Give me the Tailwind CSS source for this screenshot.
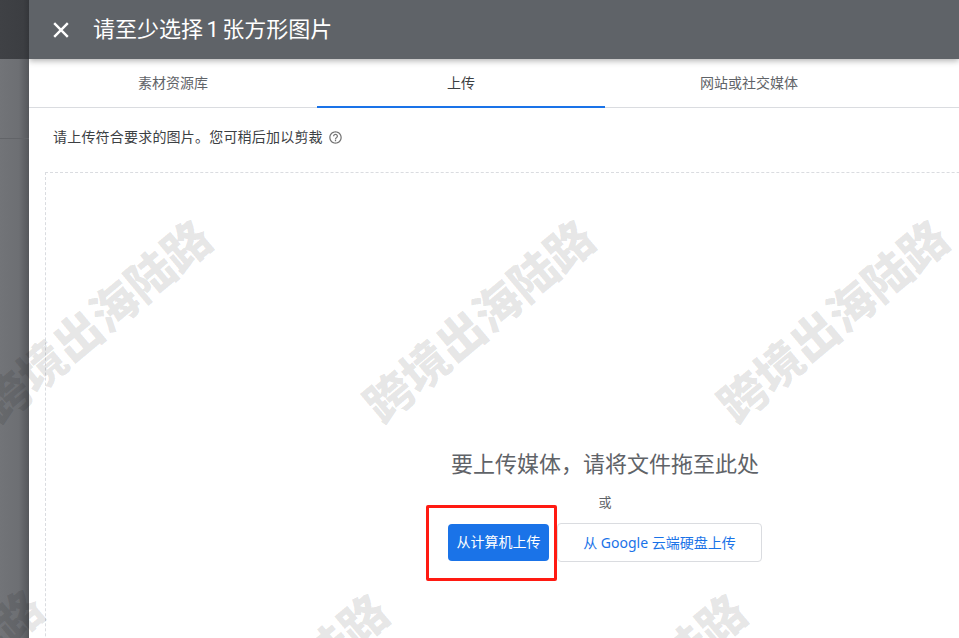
<!DOCTYPE html>
<html lang="zh-CN">
<head>
<meta charset="utf-8">
<script src="https://cdn.jsdelivr.net/npm/@tailwindcss/browser@4"></script>
</head>
<body class="font-['Roboto','Noto_Sans_CJK_SC',sans-serif]">
<div class="relative flex h-[638px] w-[959px] overflow-hidden bg-white">
  <aside class="flex h-full w-[29px] shrink-0 flex-col bg-[linear-gradient(90deg,#727478_0%,#6d6f73_65%,#55575b_100%)]">
    <div class="h-[59px] shrink-0 bg-[linear-gradient(90deg,#3f4145_0%,#3c3e42_80%,#34363a_100%)]"></div>
    <div class="h-[80px] shrink-0 border-b border-[#626468]"></div>
  </aside>
  <main class="flex h-full min-w-0 flex-1 flex-col overflow-hidden">
    <header class="z-10 flex h-[59px] shrink-0 items-center bg-[#5f6368] pl-[24px] shadow-[0_2px_6px_rgba(0,0,0,0.3)]">
      <svg class="h-[16px] w-[16px]" viewBox="0 0 16 16" fill="none" stroke="#fff" stroke-width="2.4"><path d="M1.2 1.2l13.6 13.6M14.8 1.2L1.2 14.8"/></svg>
      <h1 class="ml-[24px] text-[22px] font-normal leading-none text-white [word-spacing:-2px]">请至少选择 1 张方形图片</h1>
    </header>
    <nav class="flex h-[49px] shrink-0 border-b border-[#dadce0] text-[14px] text-[#5f6368]">
      <div class="flex w-[288px] items-center justify-center pt-[1px]">素材资源库</div>
      <div class="relative flex w-[288px] items-center justify-center pt-[1px] text-[#3c4043]">上传<span class="absolute bottom-[-1px] left-0 h-[2px] w-full bg-[#1a73e8]"></span></div>
      <div class="flex w-[288px] items-center justify-center pt-[1px]">网站或社交媒体</div>
    </nav>
    <p class="mt-[19px] flex h-[20px] shrink-0 items-center pl-[24px] text-[14px] tracking-[0.2px] text-[#3c4043]">请上传符合要求的图片。您可稍后加以剪裁
      <svg class="ml-[5px] h-[15px] w-[15px]" viewBox="0 0 24 24" fill="#757575"><path d="M11 18h2v-2h-2v2zm1-16C6.48 2 2 6.48 2 12s4.48 10 10 10 10-4.48 10-10S17.52 2 12 2zm0 18c-4.41 0-8-3.59-8-8s3.59-8 8-8 8 3.59 8 8-3.59 8-8 8zm0-14c-2.21 0-4 1.79-4 4h2c0-1.1.9-2 2-2s2 .9 2 2c0 2-3 1.75-3 5h2c0-2.25 3-2.5 3-5 0-2.21-1.79-4-4-4z"/></svg>
    </p>
    <section class="ml-[16px] mt-[25px] flex h-[700px] w-[1120px] shrink-0 flex-col items-center border border-dashed border-[#dadce0] pt-[277px]">
      <h2 class="whitespace-nowrap text-[22px] font-normal leading-[30px] text-[#5f6368]">要上传媒体，请将文件拖至此处</h2>
      <p class="mt-[13px] text-[13px] leading-[20px] text-[#5f6368]">或</p>
      <div class="mt-[10px] flex items-center gap-[8px]">
        <button class="h-[37px] w-[101px] rounded-[4px] bg-[#1a73e8] text-[14px] text-white">从计算机上传</button>
        <button class="h-[39px] w-[205px] rounded-[4px] border border-[#dadce0] bg-white font-['Noto_Sans','Noto_Sans_CJK_SC',sans-serif] text-[14px] text-[#1a73e8]">从 Google 云端硬盘上传</button>
      </div>
    </section>
  </main>

  <div class="pointer-events-none absolute left-[426px] top-[505px] h-[76px] w-[131px] rounded-[2px] border-[3px] border-[#ff1a12]"></div>

  <span class="pointer-events-none absolute left-[286px] top-[-47px] -translate-x-1/2 -translate-y-1/2 rotate-[-40deg] whitespace-nowrap text-[47px] font-black leading-none text-black/10">跨境出海陆路</span>
  <span class="pointer-events-none absolute left-[661px] top-[-47px] -translate-x-1/2 -translate-y-1/2 rotate-[-40deg] whitespace-nowrap text-[47px] font-black leading-none text-black/10">跨境出海陆路</span>
  <span class="pointer-events-none absolute left-[1009px] top-[-47px] -translate-x-1/2 -translate-y-1/2 rotate-[-40deg] whitespace-nowrap text-[47px] font-black leading-none text-black/10">跨境出海陆路</span>
  <span class="pointer-events-none absolute left-[97px] top-[322px] -translate-x-1/2 -translate-y-1/2 rotate-[-40deg] whitespace-nowrap text-[47px] font-black leading-none text-black/10">跨境出海陆路</span>
  <span class="pointer-events-none absolute left-[480px] top-[322px] -translate-x-1/2 -translate-y-1/2 rotate-[-40deg] whitespace-nowrap text-[47px] font-black leading-none text-black/10">跨境出海陆路</span>
  <span class="pointer-events-none absolute left-[834px] top-[322px] -translate-x-1/2 -translate-y-1/2 rotate-[-40deg] whitespace-nowrap text-[47px] font-black leading-none text-black/10">跨境出海陆路</span>
  <span class="pointer-events-none absolute left-[-71px] top-[692px] -translate-x-1/2 -translate-y-1/2 rotate-[-40deg] whitespace-nowrap text-[47px] font-black leading-none text-black/10">跨境出海陆路</span>
  <span class="pointer-events-none absolute left-[274px] top-[696px] -translate-x-1/2 -translate-y-1/2 rotate-[-40deg] whitespace-nowrap text-[47px] font-black leading-none text-black/10">跨境出海陆路</span>
  <span class="pointer-events-none absolute left-[632px] top-[696px] -translate-x-1/2 -translate-y-1/2 rotate-[-40deg] whitespace-nowrap text-[47px] font-black leading-none text-black/10">跨境出海陆路</span>
</div>
</body>
</html>
